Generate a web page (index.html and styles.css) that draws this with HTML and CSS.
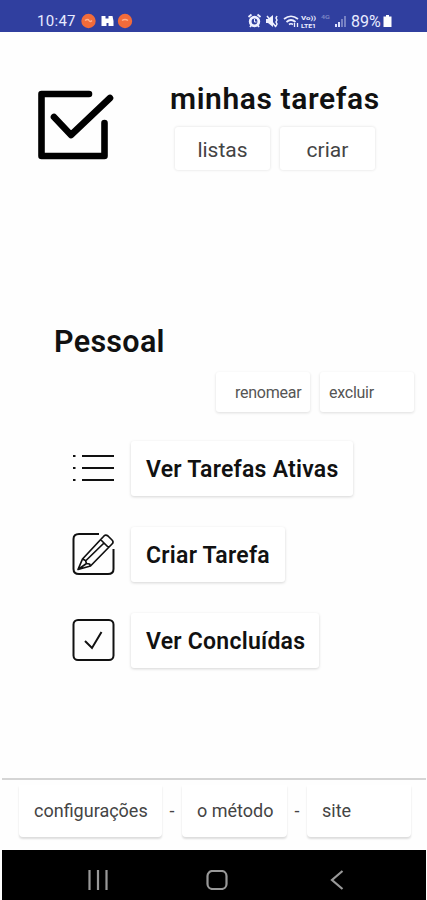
FILE: index.html
```html
<!DOCTYPE html>
<html lang="pt-BR">
<head>
<meta charset="utf-8">
<title>minhas tarefas</title>
<link rel="stylesheet" href="styles.css">
</head>
<body>
<div class="status">
  <span class="clock">10:47</span>
  <svg class="status-left" width="52" height="16" viewBox="0 0 52 16">
    <circle cx="7.500" cy="8" r="7.200" fill="#f26b3a"/><path d="M4 7.500q3-2 4 0t3 0" fill="none" stroke="#ffb08c" stroke-width="1.500"/>
    <path d="M20.500 3h4v2.500h3V3h4l1 5v5h-5v-3h-2v3h-5V8z" fill="#fff"/>
    <circle cx="44" cy="8" r="7.200" fill="#f26b3a"/><path d="M41 7.500q3-2 6 0" fill="none" stroke="#ffb08c" stroke-width="1.500"/>
  </svg>
  <svg class="status-right" width="102" height="16" viewBox="0 0 102 16">
    <g fill="none" stroke="#eef0ff">
      <circle cx="7.500" cy="8.500" r="4.300" stroke-width="2.800"/><path d="M1.500 4l3-2.500M13.500 4l-3-2.500M3 14l1.500-2M12 14l-1.500-2" stroke-width="1.800"/><path d="M7.500 6v3h2" stroke-width="1"/>
      <path d="M20 3l9 11M30 3l-1 2 1 2-1 2 1 2-1 2" stroke-width="1.500"/>
      <path d="M37 6q7-5.500 14 0M39.500 9q4.500-4 9 0M42 11.500q2-1.500 4 0" stroke-width="1.700"/><path d="M47.500 14v-4M50.500 10v4" stroke-width="1.300"/>
    </g>
    <path d="M19 6h2l5-4v12l-5-4h-2z" fill="#eef0ff"/>
    <g class="tiny"><text x="54" y="7" textLength="15" lengthAdjust="spacingAndGlyphs">Vo))</text><text x="54" y="14.500" textLength="15" lengthAdjust="spacingAndGlyphs">LTE1</text><text class="dim" x="74" y="6" textLength="9" lengthAdjust="spacingAndGlyphs">4G</text></g>
    <path d="M88 14v-3h2v3zM91 14V9h2v5z" fill="#dfe3ff"/><path d="M94 14V6h2v8zM97 14V3h2v11z" fill="#7781c3"/>
  </svg>
  <span class="charge">89%</span><svg class="battery" width="9" height="12" viewBox="0 0 9 12"><path d="M3 0h3v1.500h2.500V12h-8V1.500H3z" fill="#fff"/></svg>
</div>
<header class="header">
  <svg class="logo" width="76" height="70" viewBox="0 0 76 70" fill="none" stroke="#000" stroke-width="6.600" stroke-linecap="round" stroke-linejoin="round"><path d="M51 4H3.500v62H66.500V33M16 27l17 18L72 8"/></svg>
  <div class="brand">
    <h1>minhas tarefas</h1>
    <nav class="top-links"><a>listas</a><a>criar</a></nav>
  </div>
</header>
<main class="main">
  <h2>Pessoal</h2>
  <div class="list-tools"><a class="rename">renomear</a><a class="delete">excluir</a></div>
  <ul class="actions">
    <li>
      <svg width="44" height="44" viewBox="0 0 44 44" fill="none" stroke="#111" stroke-width="2"><path d="M10 10h32M10 22h32M10 34h32M1 10h2.500M1 22h2.500M1 34h2.500"/></svg>
      <a class="active-tasks"><span>Ver Tarefas Ativas</span></a>
    </li>
    <li>
      <svg width="44" height="44" viewBox="0 0 44 44" fill="none" stroke="#111" stroke-width="2" stroke-linejoin="round"><path d="M27 2H7Q1.500 2 1.500 7v30q0 5 5.500 5h29q5.500 0 5.500-5V17"/><path stroke-width="1.700" d="M6 37.500L10.500 27 31.500 4.500q2-2.500 4.500-.5l4 4q2 2 0 4L18.500 34zM10.500 27l3 1.500 1 3 3 .5 1 2M28.500 7.500l8 8M14 28.500L32 11M6 37.500l8.500-6"/></svg>
      <a class="create-task"><span>Criar Tarefa</span></a>
    </li>
    <li>
      <svg width="44" height="44" viewBox="0 0 44 44" fill="none" stroke="#111" stroke-width="2"><rect x="1.500" y="2" width="40" height="40" rx="4.500"/><path d="M13 23l7 7 9.500-16"/></svg>
      <a class="done-tasks"><span>Ver Concluídas</span></a>
    </li>
  </ul>
</main>
<footer class="footer">
  <a class="settings">configurações</a><i>-</i><a class="method">o método</a><i>-</i><a class="site">site</a>
</footer>
<div class="system-nav">
  <svg width="20" height="20" viewBox="0 0 20 20" stroke="#999" stroke-width="2.200"><path d="M1.500 0v20M10 0v20M18.500 0v20"/></svg>
  <svg width="22" height="20" viewBox="0 0 22 20" fill="none" stroke="#999" stroke-width="2.200"><rect x="1.500" y="1" width="19" height="18" rx="5"/></svg>
  <svg width="14" height="20" viewBox="0 0 14 20" fill="none" stroke="#999" stroke-width="2.200"><path d="M12.500 1L2 10l10.500 9"/></svg>
</div>
</body>
</html>
```
FILE: styles.css
```css
* { box-sizing: border-box; }
body {
  margin: 0;
  width: 427px;
  height: 900px;
  display: flex;
  flex-direction: column;
  overflow: hidden;
  background: #fefefe;
  color: #111;
  font-family: Roboto, sans-serif;
}
a { display: flex; align-items: center; background: #fff; border-radius: 3px; white-space: nowrap; }
.status {
  height: 32px;
  flex: none;
  display: flex;
  align-items: center;
  padding: 10px 0 0 37px;
  background: #303f9f;
  color: #e8ebff;
  font-size: 15px;
}
.clock { width: 44px; letter-spacing: .3px; }
.status-right { margin-left: 114px; }
.charge { width: 33px; margin-left: 2px; font-size: 16px; }
.battery { margin-left: -1px; }
.tiny { font: 700 6px Roboto, sans-serif; fill: #eef0ff; }
.tiny .dim { fill: #7781c3; font-size: 6px; }
.header { height: 291px; flex: none; display: flex; padding: 49px 0 0 38px; }
.logo { margin-top: 9px; flex: none; }
.brand { margin-left: 56px; }
h1, h2 { margin: 0; font-weight: 600; white-space: nowrap; }
h1 { font-size: 30px; line-height: 35px; letter-spacing: .6px; }
.top-links { display: flex; gap: 10px; padding: 11px 0 0 5px; }
.top-links a {
  width: 95px;
  height: 43px;
  justify-content: center;
  padding-top: 3px;
  color: #444;
  font-size: 21px;
  box-shadow: 0 0 3px #ddd;
}
.main { height: 455px; flex: none; }
h2 { padding-left: 54px; font-size: 30.5px; line-height: 37px; letter-spacing: .3px; }
.list-tools { display: flex; gap: 10px; padding: 12px 0 0 216px; }
.list-tools a { width: 94px; height: 40px; color: #555; font-size: 16px; letter-spacing: -.25px; box-shadow: 0 1px 3px #ddd; }
.rename { padding-left: 19px; }
.delete { padding-left: 9px; }
.actions { list-style: none; margin: 0; padding: 29px 0 0 72px; display: flex; flex-direction: column; gap: 31px; }
.actions li { display: flex; align-items: center; gap: 15px; }
.actions svg { margin-top: -1px; }
.actions a { height: 55px; padding: 1px 0 0 15px; font-size: 23px; font-weight: 600; letter-spacing: .25px; box-shadow: 0 1px 3px #d5d5d5; }
.active-tasks { width: 222px; }
.create-task { width: 154px; }
.done-tasks { width: 188px; }
.footer {
  height: 72px;
  flex: none;
  display: flex;
  align-items: flex-start;
  margin: 0 1px 0 2px;
  padding: 5px 0 0 17px;
  border-top: 2px solid #d5d5d5;
  color: #444;
  font-size: 18px;
}
.footer a { height: 52px; border-radius: 0 0 4px 4px; padding: 0 0 1px 15px; box-shadow: 0 2px 2px #ddd; }
.footer i { width: 20px; line-height: 52px; text-align: center; font-style: normal; }
.settings { width: 143px; }
.method { width: 105px; }
.site { width: 104px; }
.system-nav {
  height: 50px;
  flex: none;
  display: flex;
  align-items: center;
  margin: 0 1px 0 2px;
  padding: 9px 0 0 86px;
  background: #000;
}
.system-nav svg + svg { margin-left: 98px; }
.system-nav svg:last-child { margin-left: 102px; }
```
